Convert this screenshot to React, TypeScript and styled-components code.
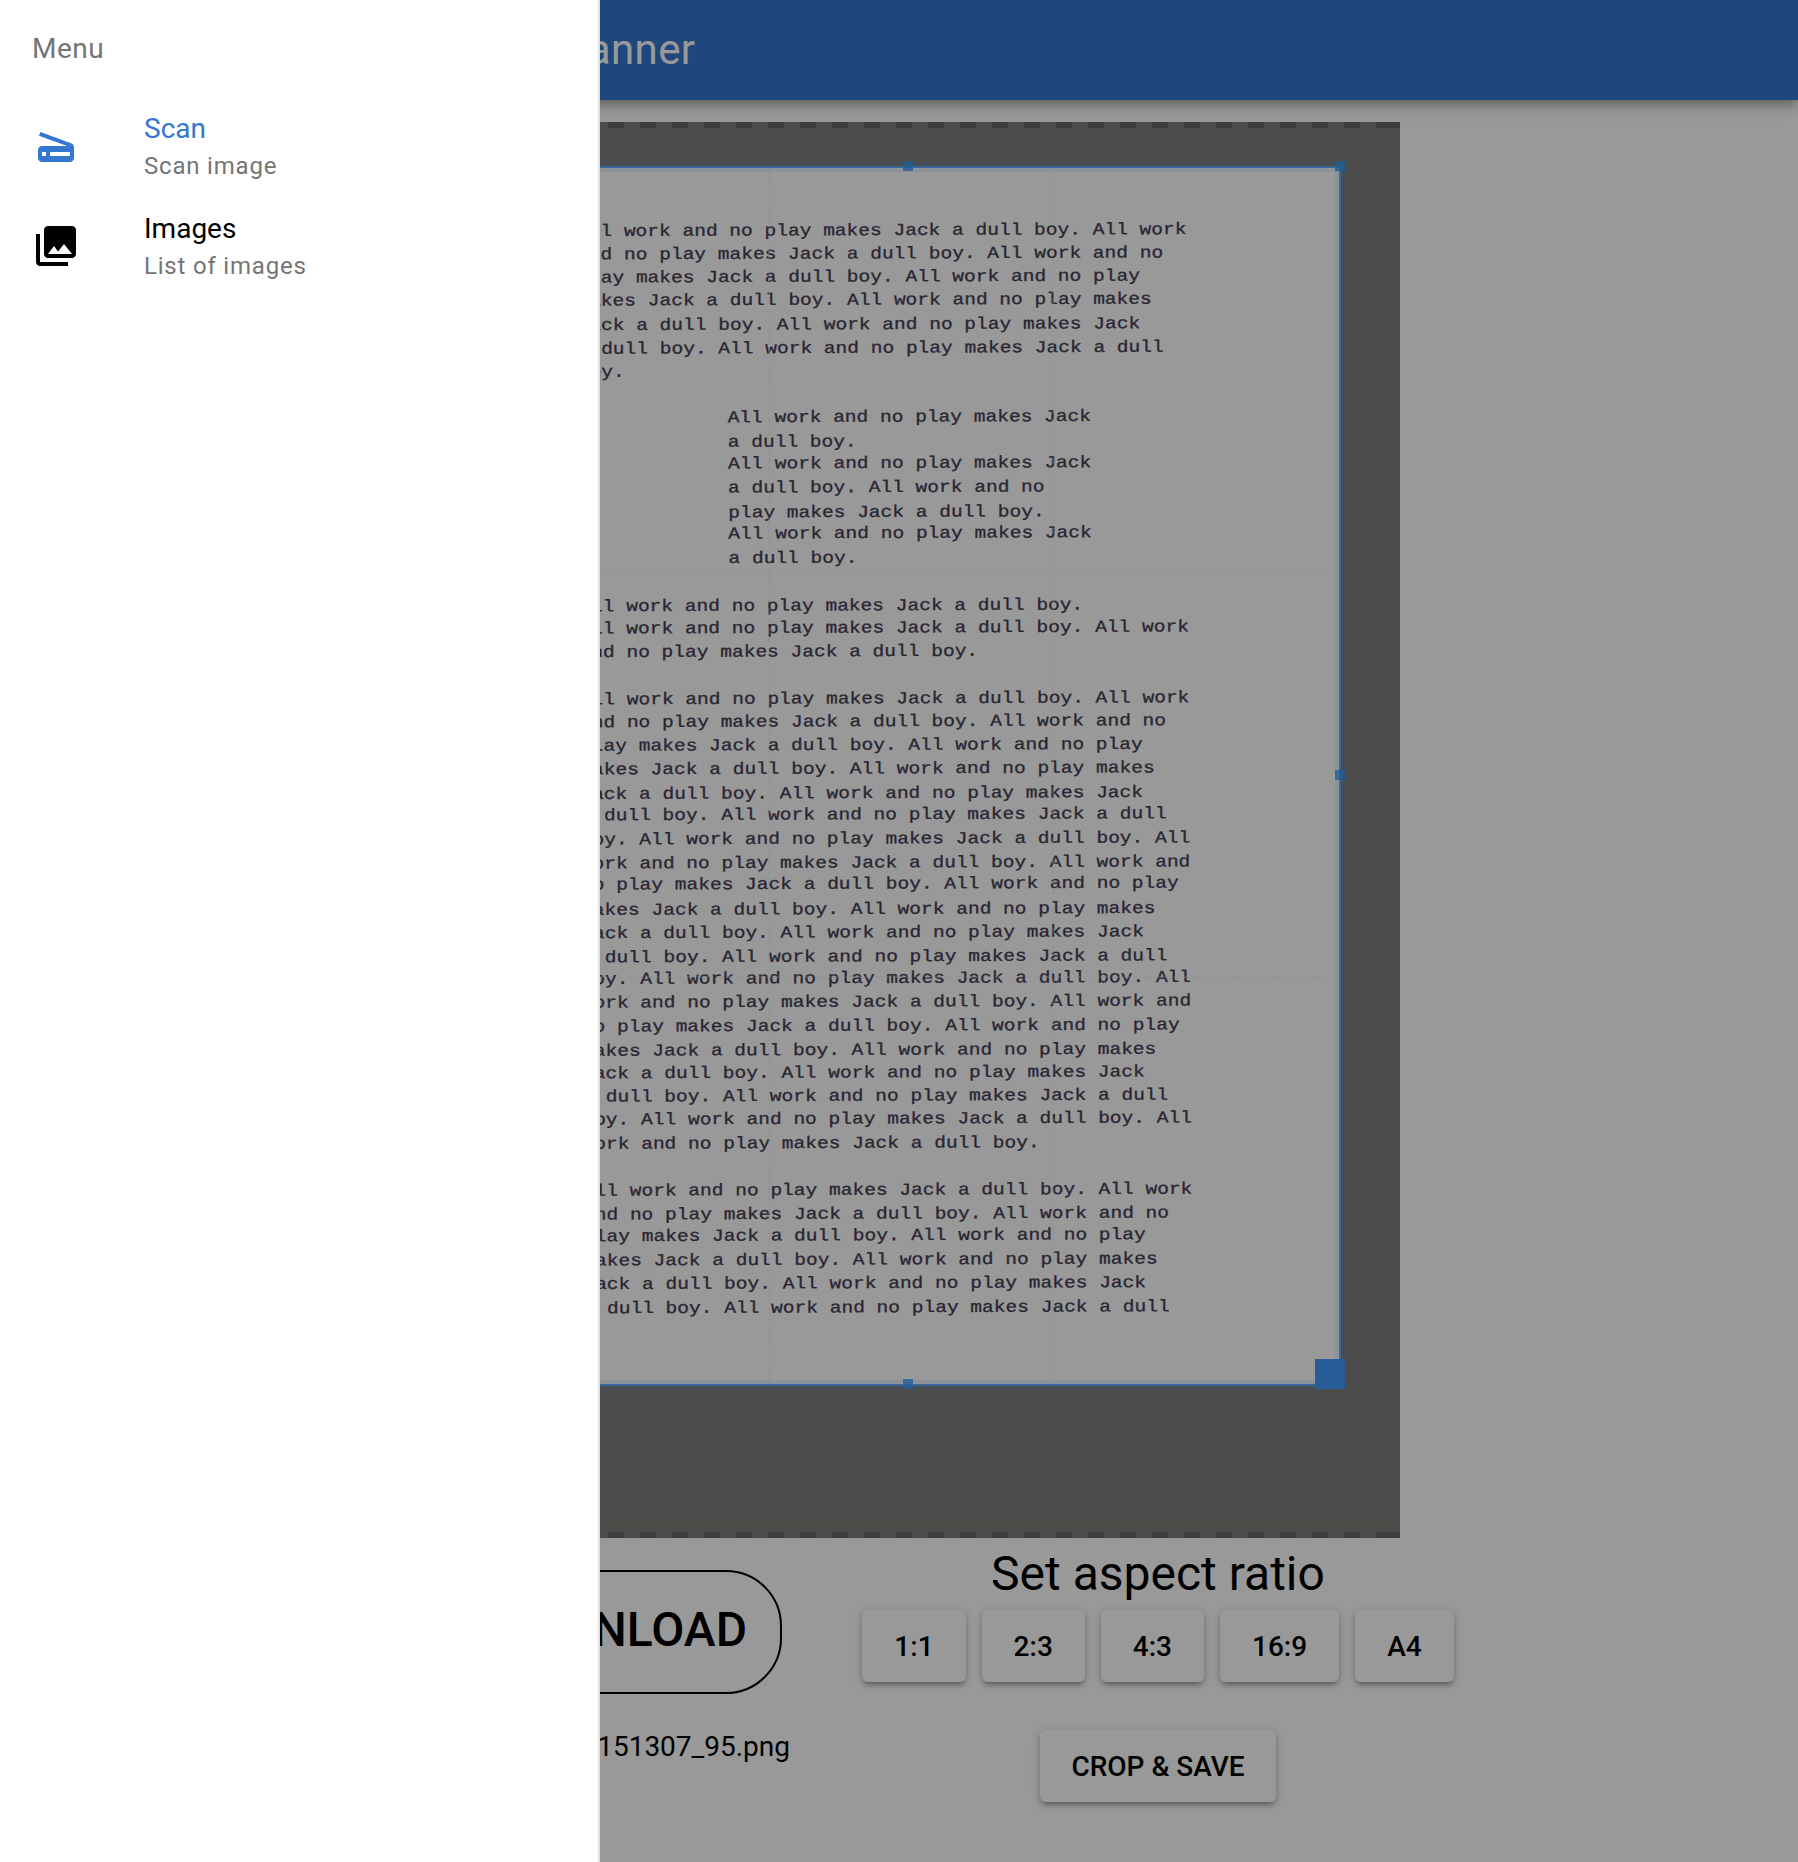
import React from 'react';
import styled, { createGlobalStyle } from 'styled-components';
import { MdPhotoLibrary, MdScanner } from 'react-icons/md';

const GlobalStyle = createGlobalStyle`
  *, *::before, *::after { box-sizing: border-box; }
  body {
    margin: 0;
    background: #fff;
    color: #000;
    font-family: Roboto, "Liberation Sans", sans-serif;
    font-size: 28px;
    line-height: 1.5;
  }
`;

const Page = styled.div`
  position: relative;
  width: 1798px;
  height: 1862px;
  overflow: hidden;
  display: flex;
  flex-direction: column;
`;

/* ---------- header ---------- */

const Header = styled.header`
  position: relative;
  z-index: 1;
  flex: none;
  display: flex;
  align-items: center;
  height: 100px;
  padding-bottom: 2px;
  background: #3576d0;
  color: #fff;
  box-shadow: 0 4px 8px -2px rgba(0, 0, 0, 0.2), 0 8px 10px rgba(0, 0, 0, 0.14),
    0 2px 20px rgba(0, 0, 0, 0.12);
`;

const ToolbarTitle = styled.div`
  width: 695.5px;
  text-align: right;
  font-size: 42px;
  letter-spacing: 0.01em;
`;

/* ---------- cropper ---------- */

const Stage = styled.section`
  position: relative;
  flex: none;
  width: 1002px;
  height: 1416px;
  margin: 22px auto 0;
  padding: 6px 0;
  overflow: hidden;
  background: repeating-linear-gradient(90deg, #ccc 0 16px, #fff 16px 32px) -14px 0;
`;

const Paper = styled.div`
  height: 100%;
  padding: 92px 0 0 179px;
  background: linear-gradient(#fff 0 1376px, #fffdf0 1404px);
`;

const Line = styled.div<{ $indent?: boolean }>`
  height: 23.41px;
  padding-left: ${(p) => (p.$indent ? 149.5 : 0)}px;
  font-family: "Liberation Mono", monospace;
  font-size: 19.55px;
  line-height: 23.41px;
  white-space: pre;
  color: #463e54;
  -webkit-text-stroke: 0.35px #463e54;
  transform-origin: 0 17px;
`;

const CropBox = styled.div`
  position: absolute;
  left: 78px;
  top: 44px;
  width: 865px;
  height: 1220px;
  border: 2px solid rgba(51, 153, 255, 0.75);
  box-shadow: 0 0 0 1600px rgba(0, 0, 0, 0.5);
`;

const Guide = styled.span<{ $vertical?: boolean; $at: number }>`
  position: absolute;
  opacity: 0.3;
  ${(p) =>
    p.$vertical
      ? `top: 0; bottom: 0; left: ${p.$at}px; border-left: 2px dashed #eee;`
      : `left: 0; right: 0; top: ${p.$at}px; border-top: 2px dashed #eee;`}
`;

const Edge = styled.span<{ $side: 'top' | 'right' | 'bottom' }>`
  position: absolute;
  background: rgba(51, 153, 255, 0.1);
  ${(p) =>
    p.$side === 'right'
      ? 'top: -2px; bottom: -2px; right: -6px; width: 10px;'
      : `left: -2px; right: -2px; ${p.$side}: -6px; height: 10px;`}
`;

const Handle = styled.span<{ $x: number; $y: number; $large?: boolean }>`
  position: absolute;
  left: ${(p) => p.$x}px;
  top: ${(p) => p.$y}px;
  width: ${(p) => (p.$large ? 30 : 10)}px;
  height: ${(p) => (p.$large ? 30 : 10)}px;
  background: ${(p) => (p.$large ? '#419afd' : '#39f')};
  opacity: ${(p) => (p.$large ? 1 : 0.75)};
`;

/* ---------- controls ---------- */

const Controls = styled.section`
  display: flex;
  gap: 72px;
`;

const FileColumn = styled.div`
  width: 790px;
  display: flex;
  flex-direction: column;
  align-items: flex-end;
  padding-top: 32px;
`;

const DownloadButton = styled.button`
  height: 124px;
  margin: 0 8px 0 0;
  padding: 0 33px 4px;
  border: 2px solid #000;
  border-radius: 56px;
  background: transparent;
  color: #000;
  font: 500 48px/1 Roboto, "Liberation Sans", sans-serif;
`;

const FileName = styled.div`
  margin-top: 32px;
  line-height: 42px;
`;

const RatioColumn = styled.div`
  width: 592px;
  display: flex;
  flex-direction: column;
  align-items: center;
`;

const RatioTitle = styled.div`
  height: 72px;
  font-size: 48px;
  line-height: 72px;
`;

const ButtonRow = styled.div`
  display: flex;
  gap: 16px;
  margin-bottom: 48px;
`;

const Button = styled.button<{ $wide?: boolean }>`
  height: 72px;
  margin: 0;
  padding: 2px ${(p) => (p.$wide ? 31 : 32)}px 0;
  border: 0;
  border-radius: 6px;
  background: #fff;
  color: #000;
  font: 500 28px/48px Roboto, "Liberation Sans", sans-serif;
  box-shadow: 0 2px 10px rgba(0, 0, 0, 0.2), 0 4px 4px rgba(0, 0, 0, 0.14),
    0 6px 2px -4px rgba(0, 0, 0, 0.12);
`;

/* ---------- drawer ---------- */

const Backdrop = styled.div`
  position: absolute;
  inset: 0;
  z-index: 2;
  background: rgba(0, 0, 0, 0.4);
`;

const Drawer = styled.aside`
  position: absolute;
  inset: 0 auto 0 0;
  z-index: 3;
  width: 600px;
  border-right: 2px solid #e0e0e0;
  background: #fff;
`;

const DrawerHeading = styled.div`
  height: 96px;
  padding: 32px;
  line-height: 33px;
  letter-spacing: 0.01786em;
  color: #757575;
`;

const Item = styled.a<{ $active?: boolean }>`
  display: flex;
  align-items: center;
  height: 100px;
  padding: 0 32px;
  color: ${(p) => (p.$active ? '#3576d0' : '#000')};
  svg { display: block; }
`;

const ItemIcon = styled.div`
  width: 112px;
  font-size: 48px;
`;

const ItemText = styled.div`
  padding-top: 2px;
`;

const ItemLabel = styled.div`
  line-height: 34px;
`;

const ItemCaption = styled.div`
  margin-top: 4px;
  font-size: 24px;
  line-height: 32px;
  letter-spacing: 0.03333em;
  color: #757575;
`;

/* ---------- data ---------- */

const opening = [
  'All work and no play makes Jack a dull boy. All work',
  'and no play makes Jack a dull boy. All work and no',
  'play makes Jack a dull boy. All work and no play',
  'makes Jack a dull boy. All work and no play makes',
  'Jack a dull boy. All work and no play makes Jack',
  'a dull boy. All work and no play makes Jack a dull',
];
const cycle = [
  'boy. All work and no play makes Jack a dull boy. All',
  'work and no play makes Jack a dull boy. All work and',
  'no play makes Jack a dull boy. All work and no play',
  ...opening.slice(3),
];
const inset = [
  'All work and no play makes Jack',
  'a dull boy.',
  'All work and no play makes Jack',
  'a dull boy. All work and no',
  'play makes Jack a dull boy.',
  'All work and no play makes Jack',
  'a dull boy.',
];

const lines: string[] = [
  ...opening, 'boy.', '',
  ...inset, '',
  'All work and no play makes Jack a dull boy.',
  opening[0],
  'and no play makes Jack a dull boy.', '',
  ...opening, ...cycle, ...cycle, cycle[0],
  'work and no play makes Jack a dull boy.', '',
  ...opening,
];

/* Typewriter baselines, measured down the page at the left margin. */
const baselines = [
  236.3, 260, 282.5, 306, 330, 354, 377.5, 0,
  423.2, 447.2, 469.2, 493.8, 518, 539.5, 563.5, 0,
  611, 633.7, 657.7, 0,
  704.7, 727, 751, 775, 799, 820.7, 844.3, 868.7, 890.3, 915, 938.7, 962.2,
  984.3, 1008.3, 1031.7, 1056.3, 1078.3, 1102, 1125.3, 1149, 0,
  1195.7, 1220, 1242, 1265.7, 1289.7, 1313.3,
];

const lineShift = (i: number) => {
  const dy = baselines[i] ? baselines[i] - (236.3 + i * 23.41) : 0;
  return `translate(${(i * 0.143).toFixed(2)}px, ${dy.toFixed(2)}px) skewY(-0.2deg) scaleY(0.86)`;
};

const ratios = ['1:1', '2:3', '4:3', '16:9', 'A4'];

export default function App() {
  return (
    <>
      <GlobalStyle />
      <Page>
        <Header>
          <ToolbarTitle>Scanner</ToolbarTitle>
        </Header>

        <Stage>
          <Paper>
            {lines.map((text, i) => (
              <Line key={i} $indent={i >= 8 && i < 15} style={{ transform: lineShift(i) }}>
                {text}
              </Line>
            ))}
          </Paper>
          <CropBox>
            <Guide $vertical $at={290} />
            <Guide $vertical $at={574} />
            <Guide $at={405} />
            <Guide $at={808} />
            <Edge $side="top" />
            <Edge $side="right" />
            <Edge $side="bottom" />
            <Handle $x={425} $y={-7} />
            <Handle $x={857} $y={-7} />
            <Handle $x={857} $y={602} />
            <Handle $x={425} $y={1211} />
            <Handle $x={837} $y={1191} $large />
          </CropBox>
        </Stage>

        <Controls>
          <FileColumn>
            <DownloadButton>DOWNLOAD</DownloadButton>
            <FileName>151307_95.png</FileName>
          </FileColumn>
          <RatioColumn>
            <RatioTitle>Set aspect ratio</RatioTitle>
            <ButtonRow>
              {ratios.map((r) => (
                <Button key={r}>{r}</Button>
              ))}
            </ButtonRow>
            <Button $wide>CROP &amp; SAVE</Button>
          </RatioColumn>
        </Controls>

        <Backdrop />
        <Drawer>
          <DrawerHeading>Menu</DrawerHeading>
          <Item $active>
            <ItemIcon><MdScanner /></ItemIcon>
            <ItemText>
              <ItemLabel>Scan</ItemLabel>
              <ItemCaption>Scan image</ItemCaption>
            </ItemText>
          </Item>
          <Item>
            <ItemIcon><MdPhotoLibrary /></ItemIcon>
            <ItemText>
              <ItemLabel>Images</ItemLabel>
              <ItemCaption>List of images</ItemCaption>
            </ItemText>
          </Item>
        </Drawer>
      </Page>
    </>
  );
}
